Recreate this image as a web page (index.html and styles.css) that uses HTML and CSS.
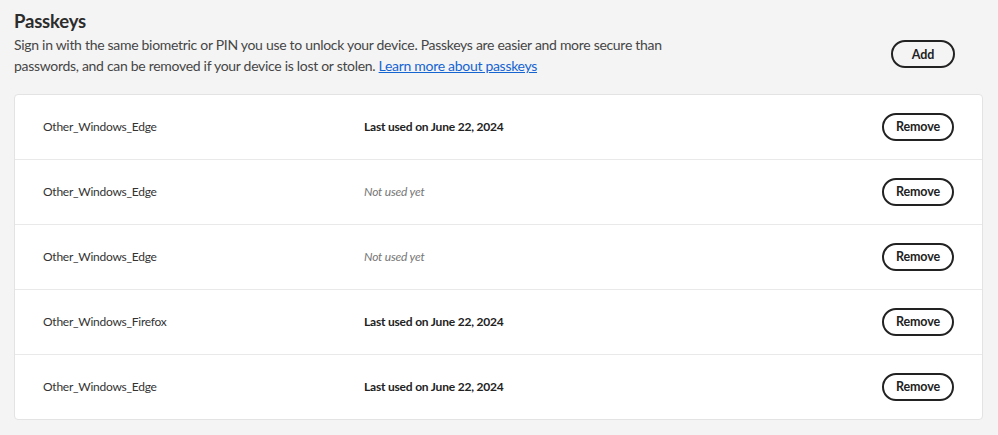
FILE: index.html
```html
<!DOCTYPE html>
<html lang="en">
<head>
<meta charset="utf-8">
<title>Passkeys</title>
<link rel="stylesheet" href="styles.css">
</head>
<body>
<section class="passkeys">
  <div class="header">
    <div class="intro">
      <h2 class="title">Passkeys</h2>
      <p class="desc">Sign in with the same biometric or PIN you use to unlock your device. Passkeys are easier and more secure than passwords, and can be removed if your device is lost or stolen. <a href="#" class="link">Learn more about passkeys</a></p>
    </div>
    <button class="btn btn-add">Add</button>
  </div>
  <div class="card">
    <div class="row">
      <span class="name">Other_Windows_Edge</span>
      <span class="status used">Last used on June 22, 2024</span>
      <button class="btn btn-remove">Remove</button>
    </div>
    <div class="row">
      <span class="name">Other_Windows_Edge</span>
      <span class="status unused">Not used yet</span>
      <button class="btn btn-remove">Remove</button>
    </div>
    <div class="row">
      <span class="name">Other_Windows_Edge</span>
      <span class="status unused">Not used yet</span>
      <button class="btn btn-remove">Remove</button>
    </div>
    <div class="row">
      <span class="name">Other_Windows_Firefox</span>
      <span class="status used">Last used on June 22, 2024</span>
      <button class="btn btn-remove">Remove</button>
    </div>
    <div class="row">
      <span class="name">Other_Windows_Edge</span>
      <span class="status used">Last used on June 22, 2024</span>
      <button class="btn btn-remove">Remove</button>
    </div>
  </div>
</section>
</body>
</html>
```

FILE: styles.css
```css
html, body {
  margin: 0;
  padding: 0;
  background: #f4f4f4;
}
body {
  font-family: "Lato", "Open Sans", sans-serif;
  color: #2c2c2c;
}
.passkeys {
  padding: 8px 15px 0 14px;
}
.header {
  display: flex;
  align-items: flex-end;
  justify-content: space-between;
  padding-bottom: 18px;
}
.intro {
  max-width: 660px;
}
.title {
  margin: 0;
  font-size: 18.5px;
  font-weight: 700;
  letter-spacing: -0.2px;
  line-height: 26px;
  color: #2c2c2c;
}
.desc {
  margin: 0;
  font-size: 14px;
  letter-spacing: -0.3px;
  line-height: 21px;
  color: #464646;
}
.link {
  color: #1464d2;
  text-decoration: underline;
}
.btn {
  font-family: inherit;
  font-weight: 700;
  font-size: 12.5px;
  letter-spacing: -0.1px;
  color: #222;
  background: transparent;
  border: 2px solid #222;
  border-radius: 14px;
  height: 28px;
  padding: 0 14px;
  cursor: pointer;
}
.btn-add {
  width: 64px;
  margin: 0 28px 8px 0;
}
.card {
  background: #fff;
  border: 1px solid #e3e3e3;
  border-radius: 4px;
}
.row {
  display: flex;
  align-items: center;
  box-sizing: border-box;
  height: 65px;
  padding: 0 28px 1px 28px;
  border-top: 1px solid #e9e9e9;
}
.row:first-child {
  border-top: none;
  height: 64px;
}
.name {
  width: 321px;
  font-size: 12px;
  letter-spacing: -0.25px;
  color: #333;
}
.status {
  flex: 1;
  font-size: 12px;
  letter-spacing: -0.2px;
}
.status.used {
  font-weight: 700;
  color: #222;
}
.status.unused {
  font-style: italic;
  color: #767676;
}
.btn-remove {
  width: 72px;
  padding: 0;
}
```
